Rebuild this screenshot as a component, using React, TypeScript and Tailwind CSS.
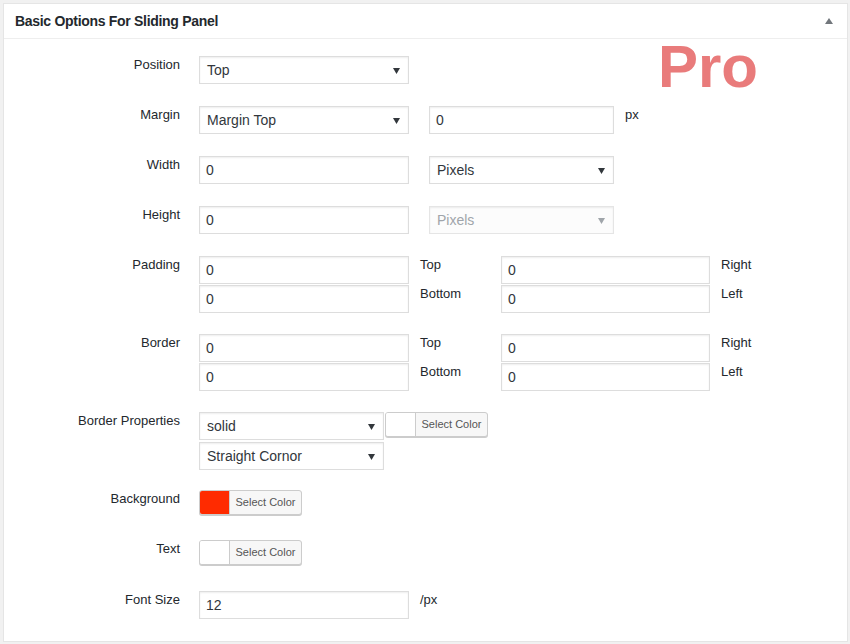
import React from 'react';

const font = "font-['Liberation_Sans',Arial,sans-serif]";

const Arrow: React.FC<{ light?: boolean }> = ({ light }) => (
  <svg width="7" height="6" viewBox="0 0 7 6" className="absolute right-[8px] top-[11px]">
    <path d="M0 0 L7 0 L3.5 6 Z" fill={light ? '#a0a5aa' : '#32373c'} />
  </svg>
);

const TextBox: React.FC<{ value: string; w?: string }> = ({ value, w = 'w-[210px]' }) => (
  <div className={`${w} h-[28px] border border-[#dddddd] bg-white shadow-[inset_0_1px_2px_rgba(0,0,0,0.07)] px-[6px] pt-[1px] flex items-center text-[14px] text-[#32373c]`}>
    {value}
  </div>
);

const SelectBox: React.FC<{ value: string; w?: string; disabled?: boolean }> = ({ value, w = 'w-[210px]', disabled }) => (
  <div
    className={`relative ${w} h-[28px] border ${disabled ? 'border-[#e5e5e5] bg-[#fcfcfc] text-[#a0a5aa]' : 'border-[#dddddd] bg-white text-[#32373c]'} shadow-[inset_0_1px_2px_rgba(0,0,0,0.07)] px-[7px] pt-[1px] flex items-center text-[14px]`}
  >
    {value}
    <Arrow light={disabled} />
  </div>
);

const ColorButton: React.FC<{ color?: string }> = ({ color = '#ffffff' }) => (
  <div className="flex h-[25px] w-[103px] rounded-[3px] border border-[#cccccc] bg-[#f7f7f7] shadow-[0_1px_0_#cccccc] overflow-hidden">
    <div className="w-[30px] h-full border-r border-[#cccccc]" style={{ backgroundColor: color }} />
    <div className="flex-1 flex items-center justify-center text-[11px] text-[#555555]">Select Color</div>
  </div>
);

const Row: React.FC<{ label: string; className?: string; children: React.ReactNode }> = ({ label, className = '', children }) => (
  <div className={`flex ${className}`}>
    <div className="w-[176px] shrink-0 text-right text-[13px] leading-[17px] text-[#23282d]">{label}</div>
    <div className="ml-[19px]">{children}</div>
  </div>
);

const Side: React.FC<{ text: string; w?: string }> = ({ text, w }) => (
  <div className={`${w ?? ''} pl-[11px] text-[13px] leading-[17px] text-[#23282d]`}>{text}</div>
);

const FourBox: React.FC = () => (
  <div className="flex flex-col gap-[1px]">
    <div className="flex">
      <TextBox value="0" />
      <Side text="Top" w="w-[92px]" />
      <TextBox value="0" w="w-[209px]" />
      <Side text="Right" />
    </div>
    <div className="flex">
      <TextBox value="0" />
      <Side text="Bottom" w="w-[92px]" />
      <TextBox value="0" w="w-[209px]" />
      <Side text="Left" />
    </div>
  </div>
);

export default function App() {
  return (
    <div className={`${font} w-[850px] h-[644px] bg-[#f1f1f1] pt-[3px] pl-[3px]`}>
      <div className="relative w-[845px] h-[639px] border border-[#e5e5e5] bg-white">
        <div className="flex items-center justify-between h-[35px] border-b border-[#eeeeee] pl-[11px] pr-[14px]">
          <h2 className="text-[14px] font-bold text-[#23282d] tracking-[-0.3px]">Basic Options For Sliding Panel</h2>
          <svg width="8" height="6" viewBox="0 0 8 6">
            <path d="M4 0 L8 6 L0 6 Z" fill="#72777c" />
          </svg>
        </div>

        <div className="absolute left-[654px] top-[28px] text-[60px] font-bold text-[#e97b7b] leading-[70px]">Pro</div>

        <div className="flex flex-col">
          <Row label="Position" className="mt-[17px]">
            <SelectBox value="Top" />
          </Row>
          <Row label="Margin" className="mt-[22px]">
            <div className="flex">
              <SelectBox value="Margin Top" />
              <div className="ml-[20px]"><TextBox value="0" w="w-[185px]" /></div>
              <Side text="px" />
            </div>
          </Row>
          <Row label="Width" className="mt-[22px]">
            <div className="flex">
              <TextBox value="0" />
              <div className="ml-[20px]"><SelectBox value="Pixels" w="w-[185px]" /></div>
            </div>
          </Row>
          <Row label="Height" className="mt-[22px]">
            <div className="flex">
              <TextBox value="0" />
              <div className="ml-[20px]"><SelectBox value="Pixels" w="w-[185px]" disabled /></div>
            </div>
          </Row>
          <Row label="Padding" className="mt-[22px]">
            <FourBox />
          </Row>
          <Row label="Border" className="mt-[21px]">
            <FourBox />
          </Row>
          <Row label="Border Properties" className="mt-[21px]">
            <div className="flex flex-col gap-[2px]">
              <div className="flex items-start gap-[1px]">
                <SelectBox value="solid" w="w-[185px]" />
                <ColorButton />
              </div>
              <SelectBox value="Straight Cornor" w="w-[185px]" />
            </div>
          </Row>
          <Row label="Background" className="mt-[20px]">
            <ColorButton color="#ff2b00" />
          </Row>
          <Row label="Text" className="mt-[25px]">
            <ColorButton />
          </Row>
          <Row label="Font Size" className="mt-[26px]">
            <div className="flex">
              <TextBox value="12" />
              <Side text="/px" />
            </div>
          </Row>
        </div>
      </div>
    </div>
  );
}
